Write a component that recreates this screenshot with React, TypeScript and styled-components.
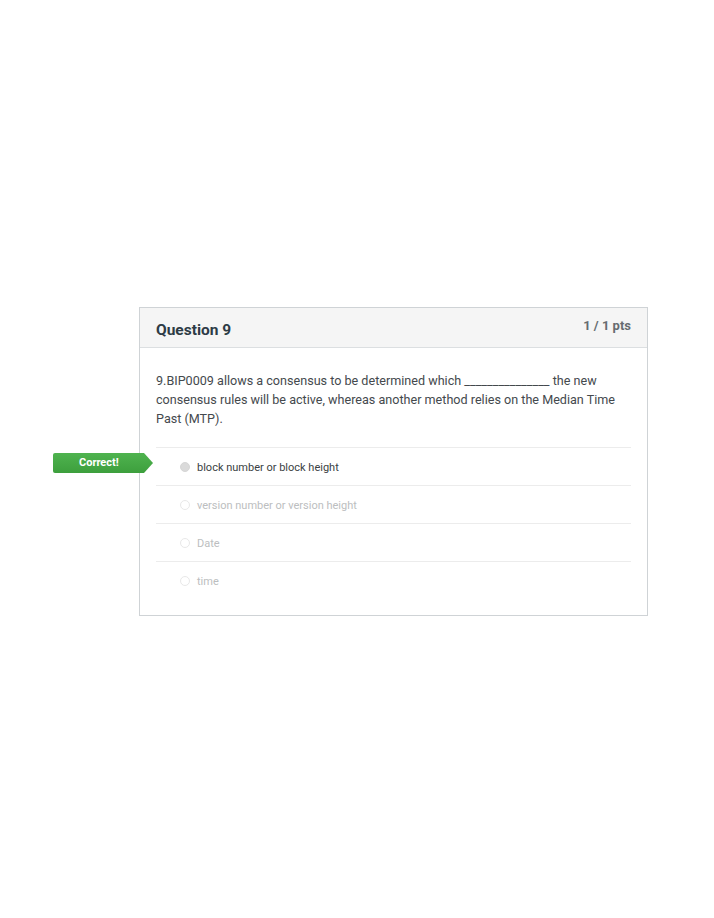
import styled, { createGlobalStyle } from 'styled-components'

const GlobalStyle = createGlobalStyle`
  html, body {
    margin: 0;
    padding: 0;
    background: #ffffff;
  }
  body {
    font-family: Roboto, "Liberation Sans", Arial, sans-serif;
  }
`

const Page = styled.div`
  width: 714px;
  height: 918px;
  padding: 307px 0 0 139px;
  box-sizing: border-box;
`

const Card = styled.section`
  width: 509px;
  border: 1px solid #cfd3d6;
  box-sizing: border-box;
  background: #fff;
`

const Header = styled.header`
  display: flex;
  justify-content: space-between;
  align-items: flex-start;
  height: 40px;
  padding: 0 16px 0 16px;
  background: #f5f5f5;
  border-bottom: 1px solid #dcdfe1;
  box-sizing: border-box;
`

const Title = styled.h2`
  margin: 12px 0 0;
  font-size: 15.5px;
  font-weight: 700;
  color: #2d3b45;
  line-height: 20px;
`

const Points = styled.span`
  margin-top: 10px;
  font-size: 13px;
  font-weight: 700;
  color: #666c70;
  line-height: 16px;
`

const Body = styled.div`
  padding: 23px 16px 16px 16px;
`

const QuestionText = styled.p`
  margin: 0 0 19px;
  font-size: 12.6px;
  line-height: 19px;
  color: #44494d;
`

const AnswerList = styled.ul`
  list-style: none;
  margin: 0;
  padding: 0;
`

const AnswerRow = styled.li`
  position: relative;
  display: flex;
  align-items: center;
  gap: 7px;
  height: 38px;
  padding-left: 24px;
  border-top: 1px solid #ececec;
  box-sizing: border-box;
`

const Radio = styled.span<{ $selected?: boolean }>`
  width: 8px;
  height: 8px;
  border-radius: 50%;
  border: 1px solid ${({ $selected }) => ($selected ? '#d6d6d6' : '#e8e8e8')};
  background: ${({ $selected }) => ($selected ? '#dadada' : '#fff')};
  flex-shrink: 0;
`

const AnswerLabel = styled.span<{ $selected?: boolean }>`
  font-size: 11px;
  color: ${({ $selected }) => ($selected ? '#3a3f43' : '#bcbec0')};
  margin-top: 1px;
`

const CorrectFlag = styled.div`
  position: absolute;
  left: -103px;
  top: 5px;
  width: 100px;
  height: 20px;
  background: linear-gradient(#4fb34f, #3d9f3d);
  clip-path: polygon(0 0, 91px 0, 100px 50%, 91px 100%, 0 100%);
  border-radius: 2px 0 0 2px;
  color: #fff;
  font-size: 11px;
  font-weight: 700;
  line-height: 19px;
  padding-left: 26px;
  box-sizing: border-box;
`

const answers = [
  'block number or block height',
  'version number or version height',
  'Date',
  'time',
]

export default function App() {
  return (
    <Page>
      <GlobalStyle />
      <Card>
        <Header>
          <Title>Question 9</Title>
          <Points>1 / 1 pts</Points>
        </Header>
        <Body>
          <QuestionText>
            9.BIP0009 allows a consensus to be determined which _______________ the new
            consensus rules will be active, whereas another method relies on the Median Time
            Past (MTP).
          </QuestionText>
          <AnswerList>
            {answers.map((a, i) => (
              <AnswerRow key={a}>
                {i === 0 && <CorrectFlag>Correct!</CorrectFlag>}
                <Radio $selected={i === 0} />
                <AnswerLabel $selected={i === 0}>{a}</AnswerLabel>
              </AnswerRow>
            ))}
          </AnswerList>
        </Body>
      </Card>
    </Page>
  )
}
